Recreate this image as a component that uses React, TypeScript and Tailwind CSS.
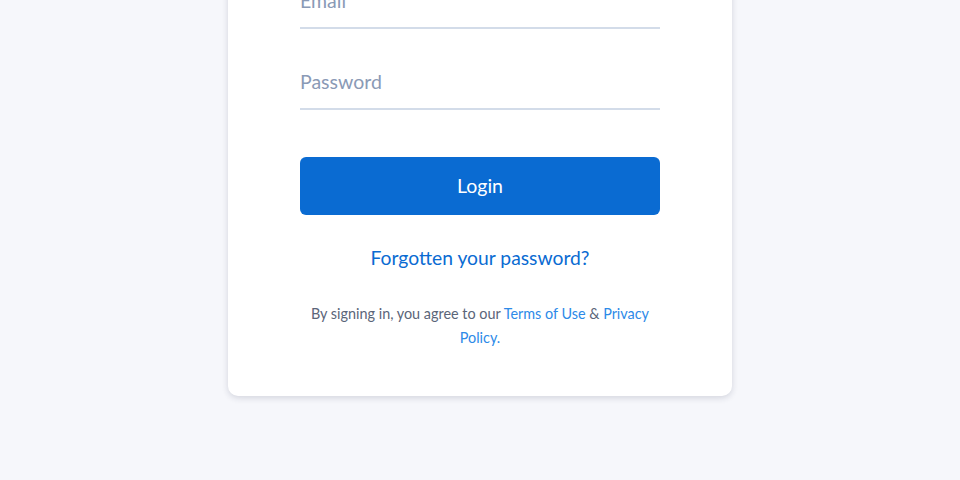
export default function App() {
  return (
    <div className="min-h-[480px] w-full bg-[#f6f7fb] flex justify-center overflow-hidden" style={{ fontFamily: "Lato, 'Noto Sans', sans-serif" }}>
      <div className="w-[504px] -mt-[52px] h-fit bg-white rounded-[10px] shadow-[0_2px_6px_rgba(30,40,70,0.16)] px-[72px] pb-[46px]">
        <div className="pt-[39px] pb-[12px] border-b-2 border-[#d3dce9]">
          <div className="h-[28px] leading-[28px] text-[19.5px] text-[#8a9ab6]">Email</div>
        </div>
        <div className="pt-[39px] pb-[12px] border-b-2 border-[#d3dce9]">
          <div className="h-[28px] leading-[28px] text-[19.5px] text-[#8a9ab6]">Password</div>
        </div>
        <button className="mt-[47px] w-full h-[58px] rounded-[6px] bg-[#0a6bd2] text-white text-[19.5px] flex items-center justify-center">
          Login
        </button>
        <div className="mt-[29px] text-center text-[19.3px] leading-[28px] text-[#0a6bd2]">
          Forgotten your password?
        </div>
        <p className="mt-[30px] text-center text-[14.4px] leading-[24px] text-[#5b6579]">
          By signing in, you agree to our <span className="text-[#2d8ae8]">Terms of Use</span> &amp;{" "}
          <span className="text-[#2d8ae8]">Privacy Policy.</span>
        </p>
      </div>
    </div>
  );
}
